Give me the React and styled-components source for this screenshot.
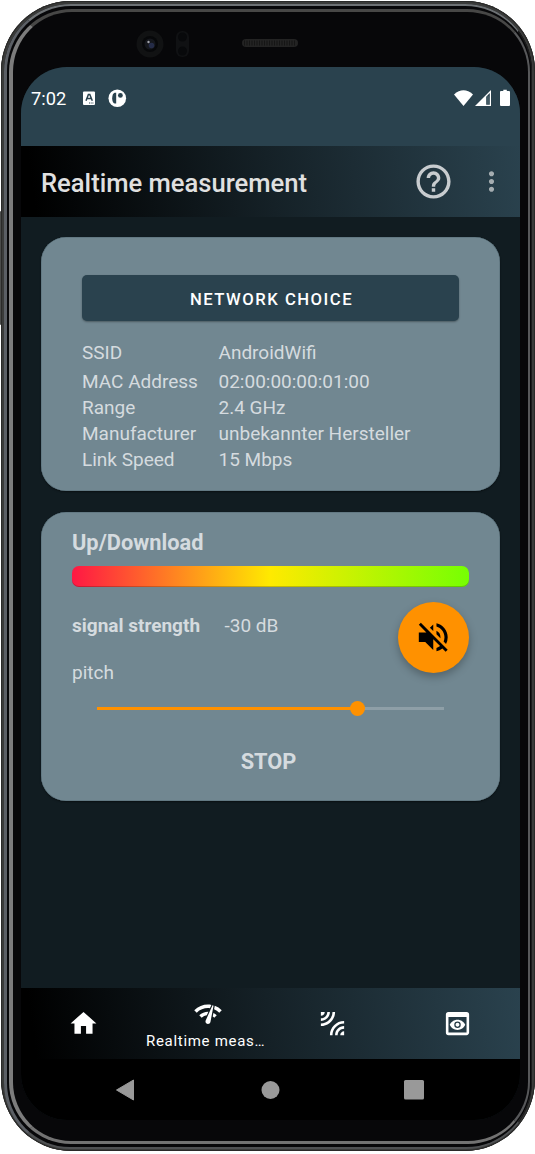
import React from "react";
import styled, { createGlobalStyle } from "styled-components";
import {
  MdHome, MdNetworkCheck, MdLeakAdd, MdPreview, MdHelpOutline, MdMoreVert, MdVolumeOff,
} from "react-icons/md";

const Global = createGlobalStyle`
  * { box-sizing: border-box; }
  body { margin: 0; background: #fff; font-family: Roboto, "Liberation Sans", sans-serif; }
  svg { display: block; }
`;

const Device = styled.div`
  position: relative;
  padding: 1px 0 0 1px;
`;

const SideKey = styled.i`
  position: absolute;
  left: 0;
  top: 211px;
  width: 2px;
  height: 114px;
  border-radius: 1px;
  background: #4a4b4a;
`;

const Phone = styled.div`
  position: relative;
  width: 534px;
  height: 1150px;
  padding: 66px 14px 31px 20px;
  border-radius: 70px 70px 70px 70px / 70px 70px 72px 72px;
  background: #070709;
  overflow: hidden;
  box-shadow: inset 0 0 0 1px #2a2a29, inset 0 0 0 3px #3a3b3a;
`;

const Rim = styled.div`
  position: absolute;
  inset: ${(p) => p.$inset};
  border: solid;
  border-width: ${(p) => p.$width};
  border-color: ${(p) => p.$color};
  border-radius: ${(p) => p.$radius};
`;

const Hardware = styled.svg`
  position: absolute;
  left: 129px;
  top: 25px;
`;

const Screen = styled.main`
  position: relative;
  display: flex;
  flex-direction: column;
  width: 499px;
  height: 1053px;
  border-radius: 46px;
  background: #111c21;
  overflow: hidden;
`;

const StatusBar = styled.div`
  display: flex;
  align-items: flex-start;
  height: 79px;
  padding: 22px 9px 0 10px;
  background: #2a424e;
  color: #fff;
`;

const Clock = styled.span`
  width: 51px;
  font-size: 18.3px;
  line-height: 20px;
`;

const StatusRight = styled.div`
  margin-left: auto;
`;

const AppBar = styled.header`
  display: flex;
  align-items: center;
  height: 71px;
  padding: 0 15px 0 20px;
  background: linear-gradient(82deg, #000 3%, #152127 50%, #2a424e 100%);
`;

const Title = styled.h1`
  flex: 1;
  margin: 0;
  padding-top: 3px;
  font-size: 25.6px;
  font-weight: 500;
  line-height: 32px;
  color: #e0e0e0;
`;

const HelpButton = styled.span`
  margin-right: 22px;
  color: #c8cccf;
`;

const MoreButton = styled.span`
  width: 29.5px;
  color: #a5adb1;
`;

const Content = styled.section`
  display: flex;
  flex: 1;
  flex-direction: column;
  gap: 21px;
  padding: 20px 20px 0;
`;

const Card = styled.article`
  height: ${(p) => p.$height}px;
  padding: ${(p) => p.$padding};
  border-radius: 25px;
  background: #718791;
  color: #d5dbdf;
  box-shadow: 0 1px 2px #0007, inset 0 0 0 0.5px #566d77;
`;

const ChoiceButton = styled.button`
  display: block;
  width: 377px;
  height: 46px;
  padding: 3px 0 0 2px;
  border: 0;
  border-radius: 5px;
  background: #2a424e;
  box-shadow: 0 1px 2px #0005;
  color: #fff;
  font: 500 16.7px/20px Roboto, sans-serif;
  letter-spacing: 1.48px;
`;

const Details = styled.dl`
  display: grid;
  grid-template-columns: 136.5px 1fr;
  grid-template-rows: 29px repeat(4, 26px);
  margin: 18.5px 0 0;
  font-size: 19px;
  line-height: 26px;
  white-space: nowrap;
`;

const Cell = styled.dd`
  margin: 0;
`;

const Heading = styled.h2`
  margin: 0;
  font-size: 21.8px;
  font-weight: 700;
  line-height: 26px;
`;

const Meter = styled.div`
  height: 21px;
  margin-top: 10px;
  border-radius: 7px;
  background: linear-gradient(90deg, #ff1744, #ffea00 50%, #76ff03);
  box-shadow: inset 0 -1px 0 #0003;
`;

const Controls = styled.div`
  display: flex;
  justify-content: space-between;
  height: 98px;
`;

const Signal = styled.div`
  padding-top: 27px;
  font-size: 19px;
  line-height: 24px;
`;

const SignalLabel = styled.b`
  display: inline-block;
  width: 152.5px;
`;

const Pitch = styled.div`
  margin-top: 22.5px;
`;

const MuteButton = styled.button`
  display: grid;
  place-items: center;
  width: 71px;
  height: 71px;
  margin-top: 15px;
  padding: 0;
  border: 0;
  border-radius: 50%;
  background: #ff9100;
  color: #000;
  box-shadow: 0 4px 8px #0004;
`;

const Slider = styled.div`
  display: flex;
  align-items: center;
  width: 347px;
  height: 15px;
  margin: 16px 0 0 25px;
`;

const Track = styled.span`
  width: ${(p) => p.$width}px;
  height: 3px;
  background: ${(p) => p.$color};
`;

const Thumb = styled.span`
  width: 15px;
  height: 15px;
  margin: 0 -7.5px;
  border-radius: 50%;
  background: #ff9100;
  z-index: 1;
`;

const Stop = styled.div`
  margin-top: 32px;
  padding-right: 4px;
  text-align: center;
  font-size: 21.8px;
  font-weight: 700;
  line-height: 28px;
`;

const TabBar = styled.nav`
  display: grid;
  grid-template-columns: repeat(4, 1fr);
  height: 71px;
  background: linear-gradient(82deg, #000 3%, #152127 50%, #2a424e 100%);
  color: #fff;
`;

const Tab = styled.div`
  display: flex;
  flex-direction: column;
  align-items: center;
  padding-top: ${(p) => (p.$active ? 11 : 20)}px;
`;

const TabLabel = styled.span`
  margin: 3px 5px 0 0;
  white-space: nowrap;
  font-size: 15px;
  line-height: 18px;
  letter-spacing: 0.7px;
`;

const SystemNav = styled.div`
  height: 61px;
  background: #000;
`;

const rows = [
  ["SSID", "AndroidWifi"],
  ["MAC Address", "02:00:00:00:01:00"],
  ["Range", "2.4 GHz"],
  ["Manufacturer", "unbekannter Hersteller"],
  ["Link Speed", "15 Mbps"],
];

function Notifications() {
  return (
    <svg width="46" height="20" viewBox="0 0 46 20">
      <rect x="1" y="2.5" width="12" height="13.5" rx="1" fill="#fff" />
      <path d="M4 11.7 6.4 5.5h1.4L10.3 11.7M5 9.6h4.2" fill="none" stroke="#2a424e" strokeWidth="1.5" />
      <path d="M7 14h5" stroke="#2a424e" strokeWidth="1" strokeDasharray="1 .7" />
      <circle cx="35.3" cy="9.3" r="8.8" fill="#fff" />
      <path d="M34.2 3.8h-1.6q-2.4 1-2.4 5.4t2.4 5.4h1.6z" fill="#2a424e" />
      <circle cx="38.4" cy="6.4" r="2.4" fill="#2a424e" />
    </svg>
  );
}

function SystemStatus() {
  return (
    <svg width="57" height="20" viewBox="0 0 57 20" fill="#fff">
      <path d="M0 5.5Q9.5-2.8 19 5.5L9.5 17z" />
      <path d="M21 17 37 1v16z" />
      <path d="M32.2 7.7 35.8 4v11.8H32.2z" fill="#2a424e" />
      <path d="M34 7v8.5" stroke="#718791" strokeWidth="0.7" />
      <path d="M47 2h2.3V.8h3.5V2H55q1 0 1 1v13q0 1-1 1h-8q-1 0-1-1V3q0-1 1-1z" />
    </svg>
  );
}

export default function App() {
  return (
    <Device>
      <Global />
      <SideKey />
      <Phone>
        <Rim
          $inset="3px 3px 2px 3px"
          $width="2px 1px 2px 3px"
          $color="#6d7174 #1b1b1c #4e5052 #5b5f65"
          $radius="67px 67px 66px 66px"
        />
        <Rim
          $inset="8px 5px 7px 8px"
          $width="3px 2px 3px 4px"
          $color="#474746 #57585a #727272 #7c7c7c"
          $radius="63px 63px 62px 62px"
        />
        <Hardware width="175" height="36" viewBox="0 0 175 36">
          <circle cx="20" cy="18" r="13.5" fill="#111213" />
          <circle cx="20" cy="18" r="8" fill="#07080a" />
          <circle cx="20" cy="18" r="5.5" fill="#15171c" />
          <circle cx="21.5" cy="19.5" r="2.8" fill="#252c48" />
          <circle cx="18.5" cy="16" r="1.2" fill="#a4a5ac" />
          <rect x="46" y="5" width="13" height="26" rx="6" fill="#101113" />
          <circle cx="52.5" cy="11" r="4.5" fill="#08090b" />
          <circle cx="52.5" cy="25" r="4.5" fill="#08090b" />
          <rect x="112" y="13" width="56" height="8" rx="4" fill="#232323" />
          <path d="M114 17h52" stroke="#151515" strokeWidth="5" strokeDasharray="1 1.5" />
        </Hardware>
        <Screen>
          <StatusBar>
            <Clock>7:02</Clock>
            <Notifications />
            <StatusRight><SystemStatus /></StatusRight>
          </StatusBar>
          <AppBar>
            <Title>Realtime measurement</Title>
            <HelpButton><MdHelpOutline size={41} /></HelpButton>
            <MoreButton><MdMoreVert size={31} /></MoreButton>
          </AppBar>
          <Content>
            <Card $height={254} $padding="38px 41px 0">
              <ChoiceButton>NETWORK CHOICE</ChoiceButton>
              <Details>
                {rows.map(([name, value]) => (
                  <React.Fragment key={name}>
                    <Cell as="dt">{name}</Cell>
                    <Cell>{value}</Cell>
                  </React.Fragment>
                ))}
              </Details>
            </Card>
            <Card $height={289} $padding="18px 31px 0">
              <Heading>Up/Download</Heading>
              <Meter />
              <Controls>
                <Signal>
                  <SignalLabel>signal strength</SignalLabel>-30 dB
                  <Pitch>pitch</Pitch>
                </Signal>
                <MuteButton><MdVolumeOff size={38.5} /></MuteButton>
              </Controls>
              <Slider>
                <Track $width={260.5} $color="#ff9100" />
                <Thumb />
                <Track $width={86.5} $color="#8e9fa7" />
              </Slider>
              <Stop>STOP</Stop>
            </Card>
          </Content>
          <TabBar>
            <Tab><MdHome size={31} /></Tab>
            <Tab $active>
              <MdNetworkCheck size={30} />
              <TabLabel>Realtime meas…</TabLabel>
            </Tab>
            <Tab><MdLeakAdd size={31} /></Tab>
            <Tab><MdPreview size={31} /></Tab>
          </TabBar>
          <SystemNav>
            <svg width="499" height="61" viewBox="0 0 499 61" fill="#999">
              <path d="M95.5 31 112.5 21v20z" stroke="#999" strokeWidth="1" strokeLinejoin="round" />
              <circle cx="249.5" cy="31" r="9" />
              <rect x="383" y="21" width="20" height="19.5" rx="1.5" />
            </svg>
          </SystemNav>
        </Screen>
      </Phone>
    </Device>
  );
}
